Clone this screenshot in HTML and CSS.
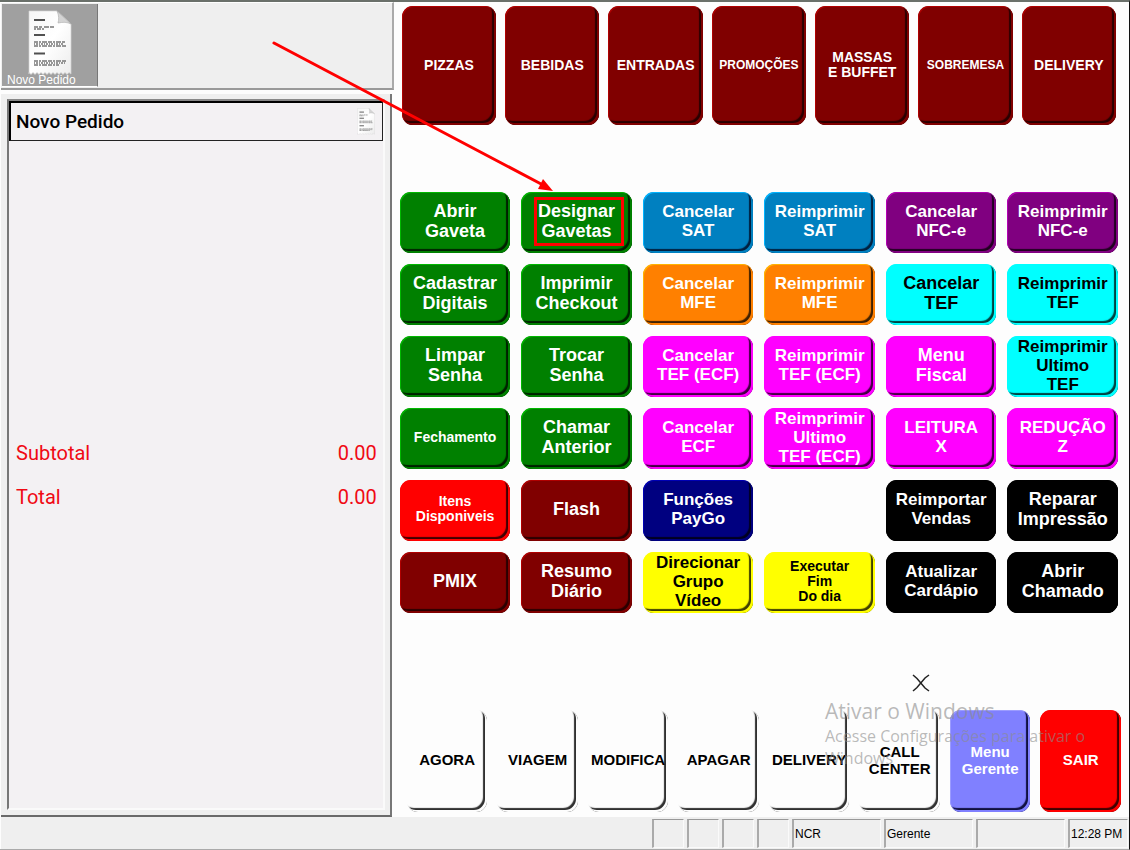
FILE: index.html
```html
<!DOCTYPE html>
<html lang="pt-BR">
<head>
<meta charset="utf-8">
<meta name="viewport" content="width=device-width, initial-scale=1">
<title>Novo Pedido</title>
<link rel="stylesheet" href="styles.css">
</head>
<body>
<svg class="defs" aria-hidden="true">
  <defs>
    <linearGradient id="paper" x1="0" y1="0" x2="1" y2="1">
      <stop offset="0" stop-color="#f6f6f6"/><stop offset="0.5" stop-color="#fff"/><stop offset="1" stop-color="#ececec"/>
    </linearGradient>
    <symbol id="receipt" viewBox="0 0 44 66">
      <path d="M1 1H29L43 14V64l-2-1.500-2 2-2-2-2 2-2-2-2 2-2-2-2 2-2-2-2 2-2-2-2 2-2-2-2 2-2-2-2 2-2-2-2 2-2-2-2 2-2-2L1 64Z" fill="url(#paper)" stroke="#d2d2d2" stroke-width="0.700"/>
      <path d="M29 1C31 5 31 10 30 13C35 12 39 12 43 14Z" fill="#d4d4d4" stroke="#aaa" stroke-width="0.600"/>
      <g fill="none" stroke="#505050">
        <path d="M6 10H17M6 25H17M6 43.500H17" stroke-width="2.200"/>
        <g stroke="#777" stroke-width="1.600">
          <path d="M6 17H27" stroke-dasharray="4 1 3 2 5 1"/>
          <path d="M6 19H17" stroke-dasharray="2 1 4 1"/>
          <path d="M6 32H37M6 36H39M6 51H39M6 55H31" stroke-dasharray="4 1 2 1 5 1"/>
          <path d="M6 34H36M6 53H37" stroke-dasharray="1 1 2 1"/>
        </g>
      </g>
    </symbol>
  </defs>
</svg>
<div class="app">
  <main class="workspace">
    <section class="order">
      <div class="tabs">
        <button class="tab" type="button">
          <svg class="tab-icon" aria-hidden="true"><use href="#receipt"/></svg>
          <span class="tab-label">Novo Pedido</span>
        </button>
      </div>
      <div class="ticket-frame">
        <div class="ticket">
          <header class="ticket-head">
            <span>Novo Pedido</span>
            <svg class="ticket-icon" aria-hidden="true"><use href="#receipt"/></svg>
          </header>
          <dl class="totals">
            <div class="total-row"><dt>Subtotal</dt><dd>0.00</dd></div>
            <div class="total-row"><dt>Total</dt><dd>0.00</dd></div>
          </dl>
        </div>
      </div>
    </section>

    <section class="panel">
      <nav class="categories">
        <button type="button" class="key maroon">PIZZAS</button>
        <button type="button" class="key maroon">BEBIDAS</button>
        <button type="button" class="key maroon">ENTRADAS</button>
        <button type="button" class="key maroon compact">PROMOÇÕES</button>
        <button type="button" class="key maroon">MASSAS<br>E BUFFET</button>
        <button type="button" class="key maroon compact">SOBREMESA</button>
        <button type="button" class="key maroon">DELIVERY</button>
      </nav>

      <div class="functions">
        <button type="button" class="key green large">Abrir<br>Gaveta</button>
        <button type="button" class="key green large marked">Designar<br>Gavetas</button>
        <button type="button" class="key blue">Cancelar<br>SAT</button>
        <button type="button" class="key blue">Reimprimir<br>SAT</button>
        <button type="button" class="key purple">Cancelar<br>NFC-e</button>
        <button type="button" class="key purple">Reimprimir<br>NFC-e</button>

        <button type="button" class="key green large">Cadastrar<br>Digitais</button>
        <button type="button" class="key green large">Imprimir<br>Checkout</button>
        <button type="button" class="key orange">Cancelar<br>MFE</button>
        <button type="button" class="key orange">Reimprimir<br>MFE</button>
        <button type="button" class="key cyan large">Cancelar<br>TEF</button>
        <button type="button" class="key cyan">Reimprimir<br>TEF</button>

        <button type="button" class="key green large">Limpar<br>Senha</button>
        <button type="button" class="key green large">Trocar<br>Senha</button>
        <button type="button" class="key magenta">Cancelar<br>TEF (ECF)</button>
        <button type="button" class="key magenta">Reimprimir<br>TEF (ECF)</button>
        <button type="button" class="key magenta large">Menu<br>Fiscal</button>
        <button type="button" class="key cyan">Reimprimir<br>Ultimo<br>TEF</button>

        <button type="button" class="key green small">Fechamento</button>
        <button type="button" class="key green large">Chamar<br>Anterior</button>
        <button type="button" class="key magenta">Cancelar<br>ECF</button>
        <button type="button" class="key magenta">Reimprimir<br>Ultimo<br>TEF (ECF)</button>
        <button type="button" class="key magenta">LEITURA<br>X</button>
        <button type="button" class="key magenta">REDUÇÃO<br>Z</button>

        <button type="button" class="key red small">Itens<br>Disponiveis</button>
        <button type="button" class="key maroon large">Flash</button>
        <button type="button" class="key navy">Funções<br>PayGo</button>
        <span></span>
        <button type="button" class="key black">Reimportar<br>Vendas</button>
        <button type="button" class="key black large">Reparar<br>Impressão</button>

        <button type="button" class="key maroon large">PMIX</button>
        <button type="button" class="key maroon large">Resumo<br>Diário</button>
        <button type="button" class="key yellow">Direcionar<br>Grupo<br>Vídeo</button>
        <button type="button" class="key yellow small">Executar<br>Fim<br>Do dia</button>
        <button type="button" class="key black">Atualizar<br>Cardápio</button>
        <button type="button" class="key black large">Abrir<br>Chamado</button>
      </div>

      <div class="actions">
        <button type="button" class="key white">AGORA</button>
        <button type="button" class="key white">VIAGEM</button>
        <button type="button" class="key white">MODIFICA</button>
        <button type="button" class="key white">APAGAR</button>
        <button type="button" class="key white">DELIVERY</button>
        <button type="button" class="key white">CALL<br>CENTER</button>
        <button type="button" class="key violet">Menu<br>Gerente</button>
        <button type="button" class="key red">SAIR</button>
      </div>

      <div class="watermark">
        <p class="watermark-title">Ativar o Windows</p>
        <p>Acesse Configurações para ativar o Windows</p>
      </div>
      <svg class="cursor" viewBox="0 0 18 18" aria-hidden="true">
        <path d="M1 1L5 4.500L13 14L17 17" fill="none" stroke="#222" stroke-width="1.500"/>
        <path d="M17 1L13 4L5 13.500L1 17" fill="none" stroke="#222" stroke-width="1.500"/>
      </svg>
    </section>
  </main>

  <footer class="status">
    <span class="cell"></span>
    <span class="cell"></span>
    <span class="cell"></span>
    <span class="cell"></span>
    <span class="cell wide">NCR</span>
    <span class="cell wide">Gerente</span>
    <span class="cell wide"></span>
    <span class="cell clock">12:28 PM</span>
  </footer>

  <svg class="arrow" viewBox="0 0 284 154" aria-hidden="true">
    <path d="M3 3L272 145" stroke="#f00" stroke-width="3" stroke-linecap="round"/>
    <path d="M282 151L267 149L272 139Z" fill="#f00"/>
  </svg>
</div>
</body>
</html>
```

FILE: styles.css
```css
* {
  box-sizing: border-box;
}

body {
  margin: 0;
  background: #fdfdfd;
  color: #000;
  font-family: "Liberation Sans", Arial, sans-serif;
}

button {
  margin: 0;
  padding: 0;
  border: 0;
  font-family: inherit;
}

.defs {
  position: absolute;
  width: 0;
  height: 0;
}

.app {
  position: relative;
  display: flex;
  flex-direction: column;
  min-height: 100vh;
  padding-left: 1px;
  border-top: 2px solid #6a706a;
  border-right: 1px solid #111;
  border-bottom: 1px solid #aaa;
}

.workspace {
  flex: 1;
  display: flex;
}

/* Order side */

.order {
  flex: 0 0 35%;
  display: flex;
  flex-direction: column;
  gap: 4px;
}

.tabs {
  display: flex;
  margin-right: 2px;
  padding: 1px 0 1px 1px;
  background: #efefef;
  border-top: 1px solid #fff;
  border-right: 2px solid #aaa;
  border-bottom: 2px solid #999;
}

.tab {
  display: flex;
  flex-direction: column;
  align-items: center;
  width: 96px;
  padding-top: 6px;
  background: #a0a0a0;
  border-right: 1px solid #777;
  border-bottom: 1px solid #fff;
}

.tab-icon {
  width: 44px;
  height: 66px;
}

.tab-label {
  align-self: flex-start;
  margin-top: -2px;
  padding-left: 5px;
  color: #fff;
  font-size: 12px;
  line-height: 12px;
}

.ticket-frame {
  flex: 1;
  display: flex;
  margin-right: 4px;
  padding: 5px 5px 5px 6px;
  background: #efefef;
  border-right: 2px solid #777;
  border-bottom: 2px solid #6a6a6a;
}

.ticket {
  flex: 1;
  display: flex;
  flex-direction: column;
  background: #f3f1f3;
  border: 2px solid #fafafa;
  border-top-color: #888;
  border-left-color: #777;
}

.ticket-head {
  display: flex;
  align-items: center;
  justify-content: space-between;
  height: 40px;
  padding: 0 7px 0 5px;
  border: 1px solid #222;
  border-top: 2px solid #000;
  border-left: 2px solid #000;
  font: 500 19px/22px Roboto, "Liberation Sans", sans-serif;
}

.ticket-icon {
  width: 18px;
  height: 27px;
}

.totals {
  margin: auto 0;
  padding: 0 6px 0 7px;
  color: #f00a14;
  font: 400 20px/44px Roboto, "Liberation Sans", sans-serif;
}

.total-row {
  display: flex;
  justify-content: space-between;
}

.total-row dd {
  margin: 0;
}

/* Key panel */

.panel {
  position: relative;
  flex: 1;
  display: flex;
  flex-direction: column;
  padding: 4px 0 5px;
}

.categories {
  display: grid;
  grid-template-columns: repeat(7, 1fr);
  gap: 9px;
  margin: 0 13px 0 6px;
}

.functions {
  display: grid;
  grid-template-columns: repeat(6, 1fr);
  gap: 11px;
  margin: 67px 11px 0 4px;
}

.actions {
  display: grid;
  grid-template-columns: repeat(8, 1fr);
  gap: 10px;
  margin: auto 8px 0 11px;
}

.key {
  --base: #800000;
  --light: #b00000;
  --dark: #2a0000;
  position: relative;
  min-width: 0;
  height: 61px;
  padding-bottom: 3px;
  border-radius: 11px;
  background: var(--base);
  box-shadow:
    inset -2px -2px 0 var(--base),
    inset 1px 1px 0 var(--light),
    inset -4px -4px 1px var(--dark);
  color: #fff;
  font-size: 17px;
  font-weight: bold;
  line-height: 19px;
  white-space: nowrap;
}

.functions .large {
  font-size: 18px;
  line-height: 20px;
}

.functions .small {
  font-size: 14px;
  line-height: 15px;
}

.categories .key {
  height: 119px;
  padding-bottom: 1px;
  font-size: 14px;
  line-height: 15px;
}

.categories .compact {
  font-size: 12px;
}

.actions .key {
  height: 102px;
  font-size: 15px;
  line-height: 17px;
}

.green { --base: #008000; --light: #00b800; --dark: #002000; }
.blue { --base: #0080c0; --light: #00b4ff; --dark: #002040; }
.purple { --base: #800080; --light: #b400b4; --dark: #200020; }
.orange { --base: #ff8000; --light: #ffb400; --dark: #402000; }
.cyan { --base: #00ffff; --light: #00ffff; --dark: #004040; color: #000; }
.magenta { --base: #ff00ff; --light: #ff00ff; --dark: #400040; }
.red { --base: #ff0000; --light: #ff0000; --dark: #400000; }
.navy { --base: #000080; --light: #0000b4; --dark: #000020; }
.yellow { --base: #ffff00; --light: #ffff00; --dark: #404000; color: #000; }
.black { --base: #000; --light: #000; --dark: #000; }
.violet { --base: #8080ff; --light: #9c9cff; --dark: #101040; }
.white { --base: #fdfdfd; --light: #fdfdfd; --dark: #303030; color: #000; }

/* Highlight box around the key label */
.marked::after {
  content: "";
  position: absolute;
  inset: 5px 8px 7px 13px;
  border: 3px solid #f00;
}

.watermark {
  position: absolute;
  right: 34px;
  bottom: 48px;
  width: 270px;
  color: rgba(140, 140, 140, 0.6);
  font: 16px/22px "Open Sans", "Noto Sans", sans-serif;
  pointer-events: none;
}

.watermark p {
  margin: 0;
}

.watermark .watermark-title {
  font-size: 21px;
  line-height: 27px;
}

.cursor {
  position: absolute;
  right: 199px;
  bottom: 125px;
  width: 18px;
  height: 18px;
}

.arrow {
  position: absolute;
  top: 38px;
  left: 271px;
  width: 284px;
  height: 154px;
  pointer-events: none;
}

/* Status bar */

.status {
  display: flex;
  justify-content: flex-end;
  gap: 3px;
  height: 32px;
  padding: 2px 1px 1px 0;
  background: #efefef;
}

.cell {
  width: 32px;
  padding-left: 1px;
  border: 1px solid #fafafa;
  border-top-color: #999;
  border-left: 2px solid #aaa;
  font-size: 12px;
  line-height: 28px;
  white-space: nowrap;
}

.wide {
  width: 89px;
}

.clock {
  width: 60px;
}
```
